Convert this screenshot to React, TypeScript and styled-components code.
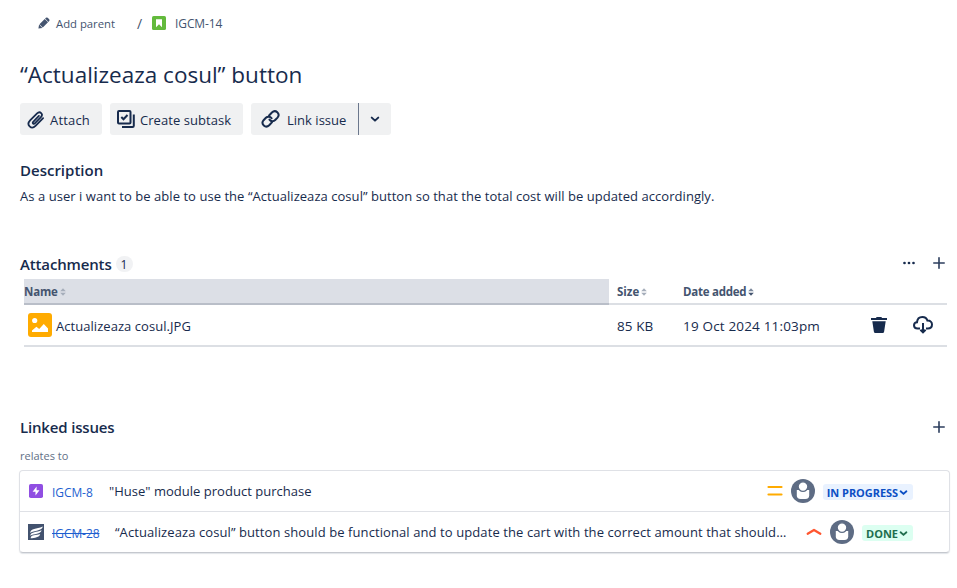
import React from 'react';
import styled, { createGlobalStyle } from 'styled-components';

const GlobalStyle = createGlobalStyle`
  *, *::before, *::after { box-sizing: border-box; }
  body {
    margin: 0;
    background: #fff;
    color: #172b4d;
    font-family: "Open Sans", "Noto Sans", sans-serif;
  }
  svg { display: block; flex: none; }
`;

const Text = styled.span<{ $size?: number; $track?: number; $color?: string; $weight?: number }>`
  font-size: ${p => p.$size ?? 13}px;
  letter-spacing: ${p => p.$track ?? 0}px;
  color: ${p => p.$color ?? 'inherit'};
  font-weight: ${p => p.$weight ?? 400};
  white-space: nowrap;
`;

const Page = styled.main`
  width: 957px;
  height: 588px;
  padding: 11px 7px 0 20px;
  display: flex;
  flex-direction: column;
  overflow: hidden;
`;

const Breadcrumbs = styled.nav`
  height: 24px;
  display: flex;
  align-items: center;
  padding-left: 18px;
  color: #44546f;
`;

const ParentLink = styled.div`
  width: 99px;
  display: flex;
  align-items: center;
  gap: 6px;
`;

const Slash = styled.span`
  width: 15px;
  font-size: 14px;
`;

const IssueCrumb = styled.div`
  display: flex;
  align-items: center;
  gap: 9px;
`;

const Title = styled.h1`
  margin: 23px 0 0;
  height: 34px;
  line-height: 34px;
  font-size: 22.5px;
  font-weight: 400;
`;

const Toolbar = styled.div`
  margin-top: 11px;
  height: 32px;
  display: flex;
  gap: 8px;
`;

const Button = styled.button<{ $width: number; $left: number; $gap: number }>`
  width: ${p => p.$width}px;
  padding: 0 0 0 ${p => p.$left}px;
  display: flex;
  align-items: center;
  gap: ${p => p.$gap}px;
  border: 0;
  border-radius: 3px;
  background: #f0f1f2;
  color: #172b4d;
  font-family: inherit;
  ${Text} { padding-top: 2px; }
`;

const SplitButton = styled.div`
  display: flex;
  ${Button}:first-child { border-radius: 3px 0 0 3px; }
  ${Button}:last-child { border-radius: 0 3px 3px 0; border-left: 1px solid #6b778c; }
`;

const SectionHeader = styled.div<{ $top: number }>`
  margin-top: ${p => p.$top}px;
  height: 22px;
  display: flex;
  align-items: center;
`;

const Heading = styled.h2<{ $track?: number }>`
  margin: 0;
  font-size: 15px;
  font-weight: 600;
  letter-spacing: ${p => p.$track ?? 0}px;
`;

const Count = styled.span`
  margin-left: 4px;
  width: 17px;
  height: 16px;
  line-height: 17px;
  border-radius: 8px;
  background: #f1f2f4;
  text-align: center;
  font-size: 12px;
`;

const HeaderActions = styled.div<{ $lift?: number }>`
  margin-left: auto;
  padding: 0 5px ${p => p.$lift ?? 0}px 0;
  display: flex;
  align-items: center;
  gap: 18px;
`;

const Paragraph = styled.p`
  margin: 4px 0 0;
  height: 20px;
  line-height: 20px;
`;

const Table = styled.div`
  margin: 4px 3px 0 4px;
  width: 923px;
`;

const TableRow = styled.div<{ $height: number }>`
  height: ${p => p.$height}px;
  display: grid;
  grid-template-columns: 585px 66px 184px 44px 44px;
  border-bottom: 2px solid #dcdfe4;
`;

const HeadCell = styled.div<{ $active?: boolean }>`
  height: ${p => (p.$active ? 26 : 24)}px;
  padding: ${p => (p.$active ? '1px 0 0 0' : '1px 0 0 8px')};
  display: flex;
  align-items: center;
  gap: 2px;
  color: #44546f;
  background: ${p => (p.$active ? '#dcdfe6' : 'transparent')};
  border-bottom: ${p => (p.$active ? '2px solid #b9bec8' : '0')};
`;

const Cell = styled.div<{ $left: number }>`
  padding-left: ${p => p.$left}px;
  display: flex;
  align-items: center;
  gap: 4px;
  ${Text} { padding-top: 2px; }
`;

const Relation = styled.div`
  margin-top: 6px;
  height: 20px;
  line-height: 20px;
  color: #626f86;
`;

const IssueList = styled.div`
  margin: 6px 0 0 -1px;
  width: 931px;
  height: 83px;
  border: 1px solid #dfe1e6;
  border-bottom-color: #c5c8ce;
  border-radius: 4px;
  box-shadow: 0 1px 1px #091e421f;
`;

const IssueRow = styled.div`
  height: 40px;
  display: flex;
  align-items: center;
  padding-left: 8px;
  & + & { border-top: 1px solid #dfe1e6; height: 41px; }
`;

const TypeIcon = styled.div<{ $inset?: number }>`
  width: 24px;
  padding-left: ${p => p.$inset ?? 0}px;
  flex: none;
`;

const IssueKey = styled.a<{ $done?: boolean; $width: number }>`
  width: ${p => p.$width}px;
  flex: none;
  padding-top: 3px;
  font-size: 12px;
  letter-spacing: -0.08px;
  color: #1f5fd0;
  text-decoration: ${p => (p.$done ? 'line-through' : 'none')};
`;

const IssueMeta = styled.div`
  margin-left: auto;
  padding-right: 36px;
  display: flex;
  align-items: center;
  gap: 8px;
`;

const Status = styled.span<{ $done?: boolean }>`
  height: 16px;
  margin-top: 2px;
  padding: 1px 5px 0 4px;
  display: flex;
  align-items: center;
  gap: 1px;
  border-radius: 3px;
  background: ${p => (p.$done ? '#dcfff1' : '#e9f2ff')};
  color: ${p => (p.$done ? '#216e4e' : '#0c4fc4')};
`;

const Pencil = () => (
  <svg width="12" height="12" viewBox="0 0 12 12" fill="#44546f">
    <path d="M.4 11.600 1.100 7.600 4.400 10.900ZM1.500 7.200 6.700 2 10 5.300 4.800 10.500ZM7.100 1.600l.8-.8q.9-.8 1.800 0l1.500 1.500q.8.900 0 1.800l-.8.800Z" />
  </svg>
);

const StoryIcon = () => (
  <svg width="14" height="14" viewBox="0 0 14 14">
    <rect width="14" height="14" rx="1.6" fill="#63ba3c" />
    <path d="M4 3.2h6v8L7 8.3 4 11.2Z" fill="#fff" />
  </svg>
);

const Clip = () => (
  <svg width="18" height="19" viewBox="0 0 18 19" fill="none" stroke="#172b4d" strokeWidth="1.8" strokeLinecap="round" strokeLinejoin="round">
    <path d="M11.900 5.900 6.200 11.800c-1.100 1.200.4 2.800 1.600 1.600l6.100-6.300c2.800-3-.9-6.600-3.800-3.700L3.100 10.300c-4.300 4.600 1.300 9.700 5.400 5.600l7.600-7.800" />
  </svg>
);

const Subtask = () => (
  <svg width="18" height="19" viewBox="0 0 18 19" fill="none" stroke="#172b4d" strokeWidth="2">
    <rect x="1" y="1" width="12.500" height="12.500" rx="1" />
    <path d="m4.300 7 2.200 2.200 4-4.200" />
    <path d="M16.800 4.500v11.200q0 1.300-1.300 1.300H5" />
  </svg>
);

const Chain = () => (
  <svg width="19" height="18" viewBox="0 0 19 18" fill="none" stroke="#172b4d" strokeWidth="2" strokeLinecap="round">
    <path d="M8.100 5.500l2.800-3c3.700-3.500 8.800 1.300 5.600 5.100l-2.300 2.400c-1.700 1.700-4.400 1.500-5.700-.4" />
    <path d="M10.900 12.400l-2.700 2.900c-3.700 3.500-8.800-1.300-5.600-5.100l2.300-2.400c1.700-1.700 4.400-1.500 5.700.4" />
  </svg>
);

const Chevron = ({ size = 8, color = '#172b4d' }: { size?: number; color?: string }) => (
  <svg width={size} height={size} viewBox="0 0 8 8" fill="none" stroke={color} strokeWidth="1.600" strokeLinecap="round" strokeLinejoin="round">
    <path d="m1.400 2.900 2.600 2.400 2.600-2.400" />
  </svg>
);

const Sort = ({ up = '#a5adba', down = '#a5adba' }: { up?: string; down?: string }) => (
  <svg width="6" height="8" viewBox="0 0 6 8">
    <path d="M3 .2 5.800 3.200H.2Z" fill={up} />
    <path d="M3 7.800 5.800 4.800H.2Z" fill={down} />
  </svg>
);

const Dots = () => (
  <svg width="12" height="4" viewBox="0 0 12 4" fill="#172b4d">
    <circle cx="1.500" cy="2" r="1.350" /><circle cx="6" cy="2" r="1.350" /><circle cx="10.500" cy="2" r="1.350" />
  </svg>
);

const Plus = () => (
  <svg width="12" height="12" viewBox="0 0 12 12" stroke="#2c3e5d" strokeWidth="1.600" strokeLinecap="round">
    <path d="M6 .8v10.400M.8 6h10.400" />
  </svg>
);

const ImageIcon = () => (
  <svg width="24" height="24" viewBox="0 0 24 24">
    <rect width="24" height="24" rx="3" fill="#ffab00" />
    <circle cx="6.700" cy="7.500" r="2.600" fill="#fff" />
    <path d="M4 19v-1.500l4.400-3.800 2.800 2.200L15.800 11l4.200 4.500V19Z" fill="#fff" />
  </svg>
);

const Trash = () => (
  <svg width="16" height="16" viewBox="0 0 16 16" fill="#172b4d">
    <path d="M5.300 0h5.400v1H16v2H0V1h5.300ZM1.300 4.200h13.400l-1.600 10.600q-.2 1.200-1.400 1.200H4.300q-1.200 0-1.400-1.200Z" />
  </svg>
);

const CloudDownload = () => (
  <svg width="20" height="18" viewBox="0 0 20 18" fill="none" stroke="#172b4d" strokeWidth="2">
    <path d="M7 12.500H4.600C2.300 12.500 1 11.200 1 9.300c0-1.800 1.200-3 3-3.100C4.300 3 6.500 1 9.300 1c2.600 0 4.500 1.400 5.200 3.600 2.800-.2 4.500 1.600 4.500 3.900 0 2.500-1.700 4-4.200 4H13" />
    <path d="M10 7v9" />
    <path d="m7.400 13.800 2.600 2.600 2.600-2.600" />
  </svg>
);

const EpicIcon = () => (
  <svg width="14" height="14" viewBox="0 0 14 14">
    <rect width="14" height="14" rx="1.800" fill="#904ee2" />
    <path d="M7.600 2.600v3.600h2.900L6.500 11.400V7.800H3.600Z" fill="#fff" />
  </svg>
);

const WingIcon = () => (
  <svg width="16" height="16" viewBox="0 0 16 16">
    <rect width="16" height="16" fill="#42526e" />
    <path d="M2.200 9C2.700 3.900 8.200 5.600 14.800 2.600 14.300 6.900 6 6.600 2.200 9ZM2.200 11.700C3 7.200 8.500 8.600 13.600 6.200 13 10.300 5.500 9.600 2.200 11.700ZM2.600 14.200c.5-4.400 5.300-2.500 9.600-4.300C11.500 13.500 6.500 13.800 2.600 14.200Z" fill="#fff" />
  </svg>
);

const Medium = () => (
  <svg width="16" height="12" viewBox="0 0 16 12" stroke="#ffab00" strokeWidth="2.200" strokeLinecap="round">
    <path d="M1.500 2h13M1.500 9.500h13" />
  </svg>
);

const High = () => (
  <svg width="16" height="8" viewBox="0 0 16 8" fill="none" stroke="#ff5630" strokeWidth="2.300" strokeLinecap="round" strokeLinejoin="round">
    <path d="M1.700 5.700 8 2l6.300 3.700" />
  </svg>
);

const Avatar = () => (
  <svg width="24" height="24" viewBox="0 0 24 24">
    <circle cx="12" cy="12" r="12" fill="#5e6c84" />
    <path d="M5.800 11h12.400v5.200q0 3.800-3.800 3.800H9.600q-3.800 0-3.800-3.800Z" fill="#fff" />
    <circle cx="12" cy="7.600" r="4.800" fill="#fff" stroke="#5e6c84" strokeWidth="1.200" />
  </svg>
);

export default function App() {
  return (
    <>
      <GlobalStyle />
      <Page>
        <Breadcrumbs>
          <ParentLink><Pencil /><Text $size={11.3}>Add parent</Text></ParentLink>
          <Slash>/</Slash>
          <IssueCrumb><StoryIcon /><Text $size={12} $track={-0.1}>IGCM-14</Text></IssueCrumb>
        </Breadcrumbs>
        <Title>“Actualizeaza cosul” button</Title>
        <Toolbar>
          <Button $width={82} $left={7} $gap={5}><Clip /><Text $track={0.18}>Attach</Text></Button>
          <Button $width={133} $left={7} $gap={5}><Subtask /><Text $track={0.06}>Create subtask</Text></Button>
          <SplitButton>
            <Button $width={107} $left={10} $gap={7}><Chain /><Text $track={0.02}>Link issue</Text></Button>
            <Button $width={33} $left={11} $gap={0} aria-label="More link options"><Chevron size={10} /></Button>
          </SplitButton>
        </Toolbar>

        <SectionHeader $top={24}><Heading>Description</Heading></SectionHeader>
        <Paragraph>
          <Text $track={0.047}>
            As a user i want to be able to use the “Actualizeaza cosul” button so that the total cost will be updated accordingly.
          </Text>
        </Paragraph>

        <SectionHeader $top={48}>
          <Heading $track={-0.15}>Attachments</Heading>
          <Count>1</Count>
          <HeaderActions $lift={2}><Dots /><Plus /></HeaderActions>
        </SectionHeader>
        <Table>
          <TableRow $height={26}>
            <HeadCell $active><Text $size={11.5} $weight={700} $track={-0.2}>Name</Text><Sort /></HeadCell>
            <HeadCell><Text $size={11.5} $weight={700}>Size</Text><Sort /></HeadCell>
            <HeadCell><Text $size={11.5} $weight={700} $track={-0.25}>Date added</Text><Sort up="#7a869a" down="#44546f" /></HeadCell>
          </TableRow>
          <TableRow $height={42}>
            <Cell $left={4}><ImageIcon /><Text $track={0.05}>Actualizeaza cosul.JPG</Text></Cell>
            <Cell $left={8}><Text $size={13.5} $track={0.1}>85 KB</Text></Cell>
            <Cell $left={8}><Text $size={13.5} $track={0.17}>19 Oct 2024 11:03pm</Text></Cell>
            <Cell $left={12}><Trash /></Cell>
            <Cell $left={10}><CloudDownload /></Cell>
          </TableRow>
        </Table>

        <SectionHeader $top={69}>
          <Heading $track={-0.17}>Linked issues</Heading>
          <HeaderActions><Plus /></HeaderActions>
        </SectionHeader>
        <Relation><Text $size={11}>relates to</Text></Relation>
        <IssueList>
          <IssueRow>
            <TypeIcon $inset={1}><EpicIcon /></TypeIcon>
            <IssueKey $width={57}>IGCM-8</IssueKey>
            <Text $track={0.02}>"Huse" module product purchase</Text>
            <IssueMeta>
              <Medium /><Avatar />
              <Status><Text $size={11} $weight={700} $track={-0.06}>IN PROGRESS</Text><Chevron size={9} color="#0c4fc4" /></Status>
            </IssueMeta>
          </IssueRow>
          <IssueRow>
            <TypeIcon><WingIcon /></TypeIcon>
            <IssueKey $done $width={63}>IGCM-28</IssueKey>
            <Text $track={0.09}>“Actualizeaza cosul” button should be functional and to update the cart with the correct amount that should…</Text>
            <IssueMeta>
              <High /><Avatar />
              <Status $done><Text $size={11} $weight={700}>DONE</Text><Chevron size={9} color="#216e4e" /></Status>
            </IssueMeta>
          </IssueRow>
        </IssueList>
      </Page>
    </>
  );
}
